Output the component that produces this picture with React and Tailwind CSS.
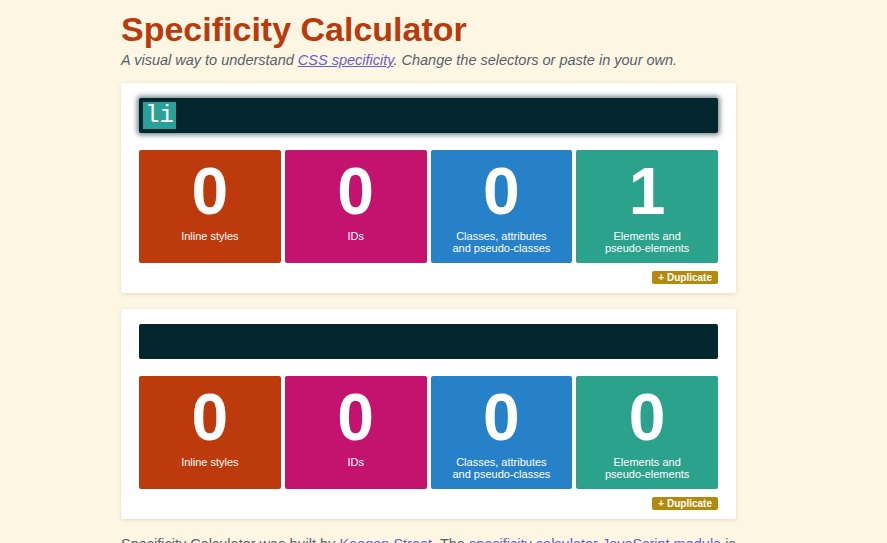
const BOXES = [
  { label: ['Inline styles'], bg: 'bg-[#bd3a0c]' },
  { label: ['IDs'], bg: 'bg-[#c4136f]' },
  { label: ['Classes, attributes', 'and pseudo-classes'], bg: 'bg-[#2681c9]' },
  { label: ['Elements and', 'pseudo-elements'], bg: 'bg-[#2aa28c]' },
];

function Calculator({ selector, counts, focused }) {
  return (
    <div className="rounded-[3px] bg-white px-[18px] pb-[9px] pt-[15px] shadow-[0_1px_4px_rgba(120,100,60,0.18)]">
      <div
        className={
          'flex h-[35px] items-center rounded-[2px] bg-[#03262f] pl-[4px] ' +
          (focused ? 'shadow-[0_0_5px_2px_rgba(3,38,47,0.55)]' : '')
        }
      >
        {selector && (
          <span className="bg-[#2aa198] px-[2px] font-['Liberation_Mono',monospace] text-[24px] leading-[27px] text-white">
            {selector}
          </span>
        )}
      </div>

      <div className="mt-[17px] grid grid-cols-4 gap-[4px]">
        {BOXES.map((b, i) => (
          <div
            key={i}
            className={`flex h-[113px] flex-col items-center rounded-[2px] pt-[8px] text-white ${b.bg}`}
          >
            <div className="text-[66px] font-bold leading-none">{counts[i]}</div>
            <div className="mt-[7px] text-center text-[11px] leading-[11.5px]">
              {b.label.map((l) => (
                <div key={l}>{l}</div>
              ))}
            </div>
          </div>
        ))}
      </div>

      <div className="mt-[8px] flex justify-end">
        <button className="h-[13px] rounded-[2px] bg-[#b38a0d] px-[6px] text-[10px] font-bold leading-[13px] text-white">
          + Duplicate
        </button>
      </div>
    </div>
  );
}

export default function App() {
  return (
    <div className="min-h-[543px] bg-[#fdf6e3] font-['Liberation_Sans',Arial,sans-serif]">
      <div className="ml-[121px] w-[615px] pt-[9px]">
        <h1 className="text-[34px] font-bold leading-[40px] text-[#bb3a0b]">Specificity Calculator</h1>
        <p className="mt-[2px] whitespace-nowrap text-[14.5px] italic leading-[18px] text-[#58606c]">
          A visual way to understand{' '}
          <a href="#" className="text-[#6a5fc8] underline">
            CSS specificity
          </a>
          . Change the selectors or paste in your own.
        </p>

        <div className="mt-[14px] flex flex-col gap-[16px]">
          <Calculator selector="li" counts={[0, 0, 0, 1]} focused />
          <Calculator selector="" counts={[0, 0, 0, 0]} />
        </div>

        <p className="mt-[15px] whitespace-nowrap text-[14.5px] leading-[20px] text-[#58606c]">
          Specificity Calculator was built by{' '}
          <a href="#" className="text-[#6a5fc8]">
            Keegan Street
          </a>
          . The{' '}
          <a href="#" className="text-[#6a5fc8]">
            specificity calculator JavaScript module
          </a>{' '}
          is
        </p>
      </div>
    </div>
  );
}
